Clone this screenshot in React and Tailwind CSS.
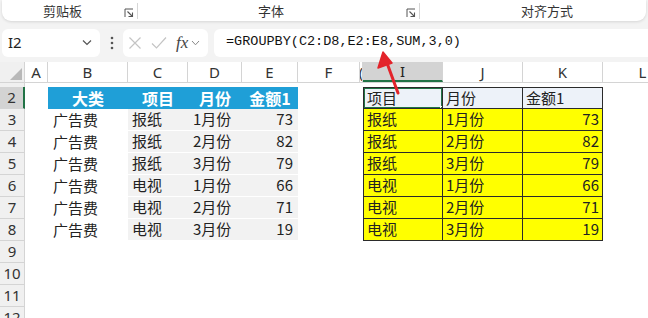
import React from "react";

const cols = [
  { k: "A", w: 23 },
  { k: "B", w: 80 },
  { k: "C", w: 60 },
  { k: "D", w: 54 },
  { k: "E", w: 56 },
  { k: "F", w: 62 },
  { k: "(", w: 3 },
  { k: "I", w: 80 },
  { k: "J", w: 80 },
  { k: "K", w: 80 },
  { k: "L", w: 80 },
];

const left = [
  ["广告费", "报纸", "1月份", 73],
  ["广告费", "报纸", "2月份", 82],
  ["广告费", "报纸", "3月份", 79],
  ["广告费", "电视", "1月份", 66],
  ["广告费", "电视", "2月份", 71],
  ["广告费", "电视", "3月份", 19],
];

const right = [
  ["报纸", "1月份", 73],
  ["报纸", "2月份", 82],
  ["报纸", "3月份", 79],
  ["电视", "1月份", 66],
  ["电视", "2月份", 71],
  ["电视", "3月份", 19],
];

const Launcher = () => (
  <svg width="10" height="10" viewBox="0 0 10 10" className="text-[#555]">
    <path d="M1 9V1h8" fill="none" stroke="currentColor" strokeWidth="1" />
    <path d="M3.5 3.5 8.5 8.5M8.5 4.5v4h-4" fill="none" stroke="currentColor" strokeWidth="1.1" />
  </svg>
);

const Ribbon = () => (
  <div className="h-[21px] mx-[2px] bg-white rounded-b-[9px] shadow-[0_1px_3px_rgba(0,0,0,0.12)] flex items-center text-[13px] text-[#333] font-['Noto_Sans_CJK_SC',sans-serif]">
    <div className="w-[135px] h-full flex items-center">
      <span className="ml-[41px]">剪贴板</span>
      <span className="ml-auto mr-[3px] mt-[4px]"><Launcher /></span>
    </div>
    <div className="w-px h-[16px] bg-[#d6d6d6]" />
    <div className="w-[281px] h-full flex items-center">
      <span className="ml-[120px]">字体</span>
      <span className="ml-auto mr-[3px] mt-[4px]"><Launcher /></span>
    </div>
    <div className="w-px h-[16px] bg-[#d6d6d6]" />
    <div className="flex-1 h-full flex items-center">
      <span className="ml-[101px]">对齐方式</span>
    </div>
  </div>
);

const FormulaBar = () => (
  <div className="h-[41px] flex items-center pt-[2px] pl-[2px]">
    <div className="w-[98px] h-[28px] bg-white rounded-[6px] flex items-center px-[6px] text-[15px] text-[#222] font-['Noto_Sans',sans-serif]">
      <span>I2</span>
      <svg width="10" height="7" viewBox="0 0 10 7" className="ml-auto mr-[2px]">
        <path d="M1 1.5 5 5.5 9 1.5" fill="none" stroke="#555" strokeWidth="1.2" />
      </svg>
    </div>
    <div className="w-[23px] flex justify-center">
      <svg width="4" height="14" viewBox="0 0 4 14">
        <circle cx="2" cy="2" r="1.3" fill="#555" />
        <circle cx="2" cy="7" r="1.3" fill="#555" />
        <circle cx="2" cy="12" r="1.3" fill="#555" />
      </svg>
    </div>
    <div className="w-[85px] h-[28px] bg-white rounded-[6px] flex items-center pl-[5px]">
      <svg width="14" height="14" viewBox="0 0 14 14">
        <path d="M1.5 1.5 12.5 12.5M12.5 1.5 1.5 12.5" stroke="#c4c4c4" strokeWidth="1.2" />
      </svg>
      <svg width="16" height="14" viewBox="0 0 16 14" className="ml-[9px]">
        <path d="M1 7.5 5.5 12 15 1.5" fill="none" stroke="#c4c4c4" strokeWidth="1.2" />
      </svg>
      <span className="ml-[9px] text-[17px] italic text-[#444] font-['Liberation_Serif',serif] leading-none">fx</span>
      <svg width="9" height="6" viewBox="0 0 9 6" className="ml-[3px]">
        <path d="M1 1 4.5 4.8 8 1" fill="none" stroke="#888" strokeWidth="1" />
      </svg>
    </div>
    <div className="ml-[6px] flex-1 h-[28px] bg-white rounded-l-[6px] flex items-center pl-[12px] text-[13.5px] text-[#111] font-['Liberation_Mono',monospace]">
      =GROUPBY(C2:D8,E2:E8,SUM,3,0)
    </div>
  </div>
);

const HeaderRow = () => (
  <div className="flex h-[21px] bg-white border-b border-[#d4d4d4] text-[15px] text-[#333] font-['Noto_Sans',sans-serif]">
    <div className="w-[25px] shrink-0 bg-[#f0f0f0] border-r border-[#d4d4d4] flex items-end justify-end p-[2px]">
      <svg width="12" height="12" viewBox="0 0 12 12">
        <path d="M12 0V12H0Z" fill="#b8b8b8" />
      </svg>
    </div>
    {cols.map((c) => (
      <div
        key={c.k}
        style={{ width: c.w }}
        className={`shrink-0 flex items-center justify-center overflow-hidden border-r border-[#d4d4d4] ${
          c.k === "I" ? "bg-[#d3d3d3] border-b-2 border-b-[#217346] text-[#222]" : ""
        }`}
      >
        {c.k}
      </div>
    ))}
  </div>
);

const cellFor = (k, r) => {
  const base = "shrink-0 h-full flex items-center overflow-hidden whitespace-nowrap";
  if (r === 2 && ["B", "C", "D", "E"].includes(k)) {
    const t = { B: "大类", C: "项目", D: "月份", E: "金额1" }[k];
    return { cls: `${base} bg-[#1f9fd7] text-white font-bold text-[16px] justify-center`, text: t };
  }
  if (r >= 3 && r <= 8) {
    const d = left[r - 3];
    if (k === "B") return { cls: `${base} pl-[5px]`, text: d[0] };
    if (k === "C") return { cls: `${base} bg-[#f2f2f2] border-b border-white pl-[4px]`, text: d[1] };
    if (k === "D") return { cls: `${base} bg-[#f2f2f2] border-b border-white pl-[5px]`, text: d[2] };
    if (k === "E") return { cls: `${base} bg-[#f2f2f2] border-b border-white justify-end pr-[5px]`, text: d[3] };
  }
  if (r === 2 && ["I", "J", "K"].includes(k)) {
    const t = { I: "项目", J: "月份", K: "金额1" }[k];
    return {
      cls: `${base} bg-[#edf2f9] border-t border-b border-r border-[#2b2b2b] pl-[3px] ${k === "I" ? "border-l relative" : ""}`,
      text: t,
      sel: k === "I",
    };
  }
  if (r >= 3 && r <= 8 && ["I", "J", "K"].includes(k)) {
    const d = right[r - 3];
    const i = { I: 0, J: 1, K: 2 }[k];
    return {
      cls: `${base} bg-[#ffff00] border-b border-r border-[#2b2b2b] ${k === "I" ? "border-l" : ""} ${
        k === "K" ? "justify-end pr-[3px]" : "pl-[3px]"
      }`,
      text: d[i],
    };
  }
  return { cls: base, text: "" };
};

const DataRow = ({ r }) => (
  <div className="flex h-[22px] text-[15px] text-[#222] font-['Noto_Sans_CJK_SC',sans-serif]">
    <div
      className={`w-[25px] shrink-0 flex items-center justify-center border-b border-[#d4d4d4] font-['Noto_Sans',sans-serif] text-[#333] ${
        r === 2 ? "bg-[#d3d3d3] border-r-2 border-r-[#217346]" : "bg-[#f0f0f0] border-r border-r-[#d4d4d4]"
      }`}
    >
      {r}
    </div>
    {cols.map((c) => {
      const cell = cellFor(c.k, r);
      return (
        <div key={c.k} style={{ width: c.w }} className={cell.cls}>
          {cell.text}
          {cell.sel && (
            <>
              <div className="absolute -inset-[1px] border-2 border-[#217346]" />
              <div className="absolute -right-[4px] -bottom-[4px] w-[6px] h-[6px] bg-[#217346] border border-white" />
            </>
          )}
        </div>
      );
    })}
  </div>
);

export default function App() {
  const rows = [2, 3, 4, 5, 6, 7, 8, 9, 10, 11, 12];
  return (
    <div className="relative w-[648px] h-[318px] overflow-hidden bg-[#f3f3f3]">
      <Ribbon />
      <FormulaBar />
      <div className="bg-white">
        <HeaderRow />
        <div className="flex h-[4px]">
          <div className="w-[25px] bg-[#f0f0f0] border-r border-[#d4d4d4]" />
        </div>
        {rows.map((r) => (
          <DataRow key={r} r={r} />
        ))}
      </div>
      <svg className="absolute left-0 top-0 pointer-events-none" width="648" height="318">
        <path d="M398 93 L387 63" stroke="#e3242b" strokeWidth="3" strokeLinecap="round" />
        <path d="M383 52 L378 68 L392 63 Z" fill="#e3242b" stroke="#e3242b" strokeWidth="1.5" strokeLinejoin="round" />
      </svg>
    </div>
  );
}
